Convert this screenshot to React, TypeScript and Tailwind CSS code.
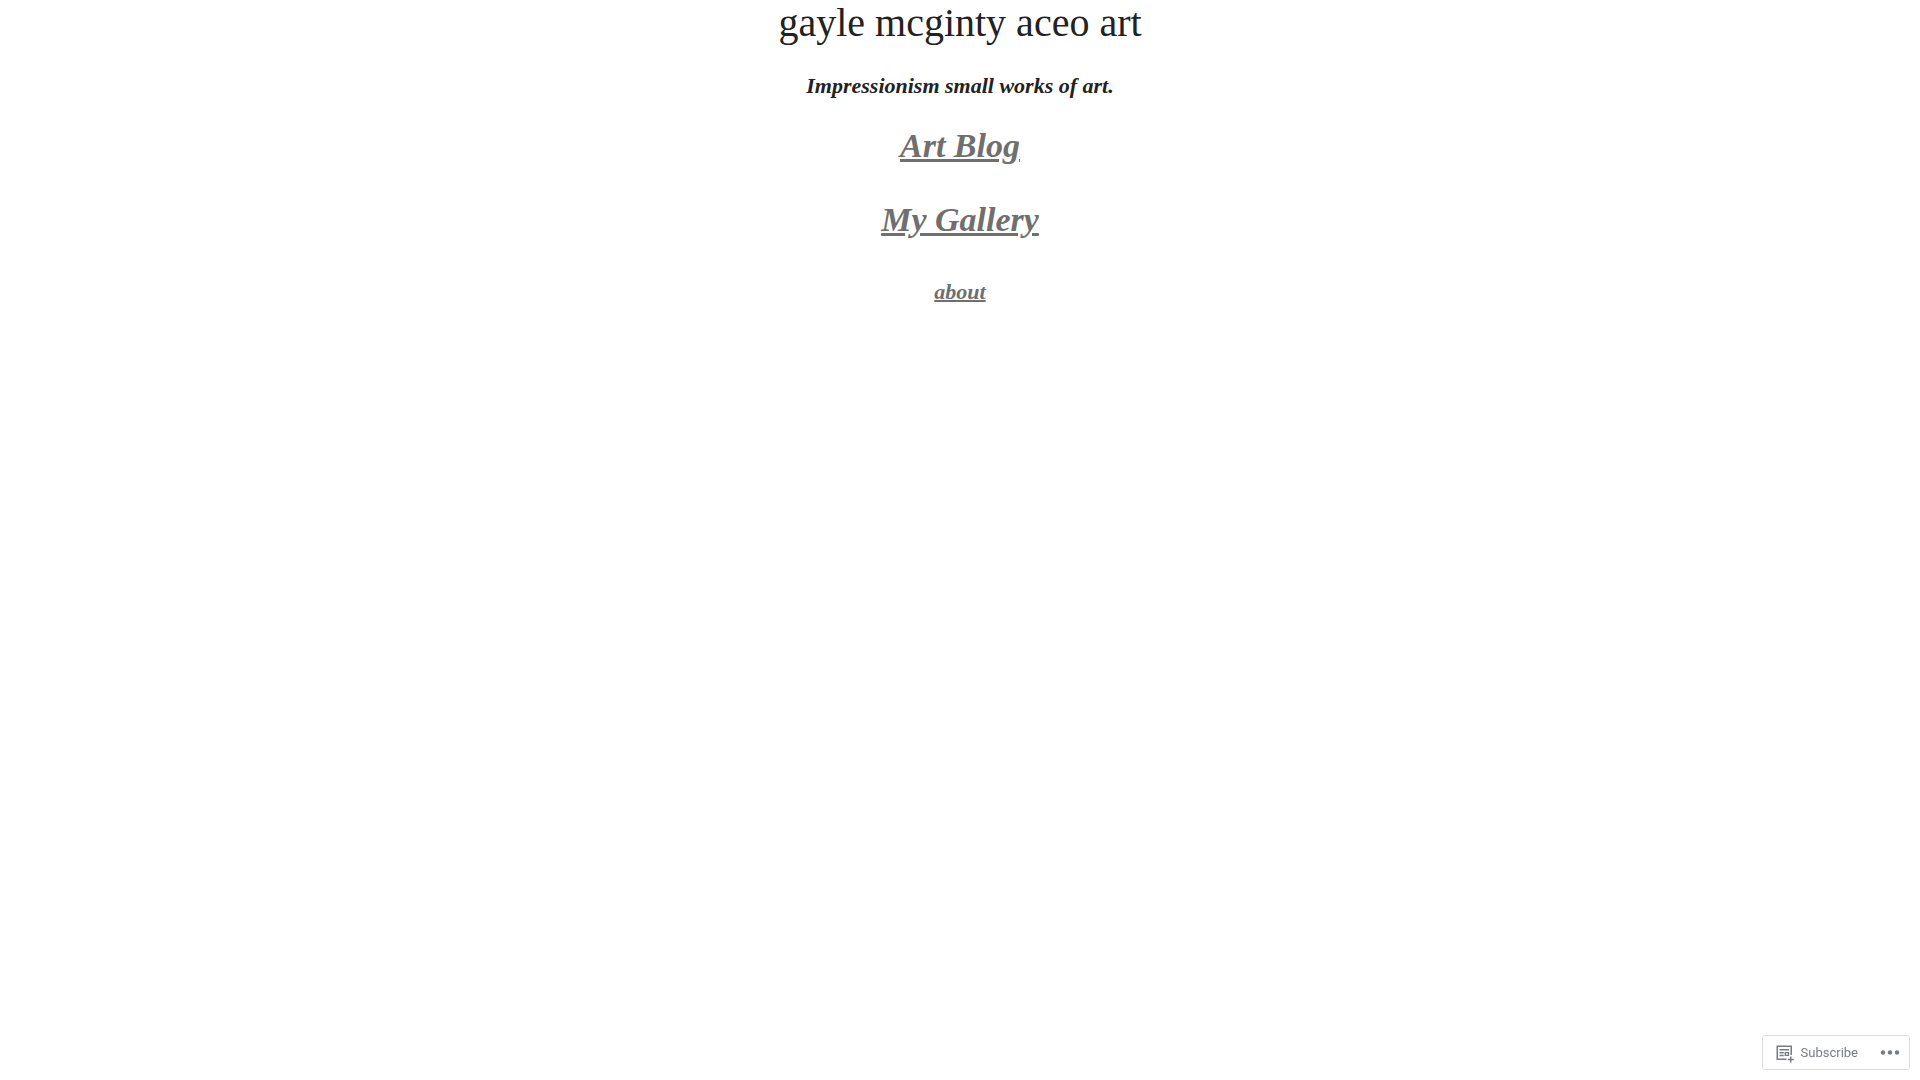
import React from "react";

const links = [
  { label: "Art Blog", href: "#blog", className: "mt-[26px] text-[34px] leading-10 decoration-3" },
  { label: "My Gallery", href: "#gallery", className: "mt-[34px] text-[34px] leading-10 decoration-3" },
  { label: "about", href: "#about", className: "mt-[38px] text-[22px] leading-7 decoration-2" },
];

function SubscribeIcon() {
  return (
    <svg className="h-5 w-5" viewBox="0 0 20 20" fill="none" stroke="#787c82" aria-hidden="true">
      <path d="M11.500 16.250H2.250V3.250h14V12" strokeWidth="1.500" />
      <path d="M4.500 6.750h9.500M4.500 9.750h4.200M4.500 12.500h4.200" strokeWidth="1.300" />
      <path d="M10.300 9.600h3.200v2.800h-3.200z" strokeWidth="1.400" />
      <path d="M15.750 13.500v6M12.750 16.500h6" strokeWidth="1.500" />
    </svg>
  );
}

function ActionBar() {
  return (
    <div className="fixed right-[10px] bottom-[10px] flex items-center rounded-[3px] border border-[#dcdcde] bg-white font-['Roboto',sans-serif] text-[13px] text-[#787c82]">
      <button type="button" className="flex h-[33px] items-center gap-1.5 pl-3">
        <SubscribeIcon />
        Subscribe
      </button>
      <button type="button" aria-label="More options" className="ml-5 mr-[7px] flex h-[33px] items-center">
        <svg className="h-6 w-6" viewBox="0 0 24 24" fill="#787c82" aria-hidden="true">
          <circle cx="5" cy="11.500" r="2.200" />
          <circle cx="12" cy="11.500" r="2.200" />
          <circle cx="19" cy="11.500" r="2.200" />
        </svg>
      </button>
    </div>
  );
}

export default function App() {
  return (
    <div className="min-h-screen bg-white font-['Liberation_Serif',serif] text-[#222222]">
      <header className="flex flex-col items-center">
        <h1 className="text-[40px] leading-[46px]">gayle mcginty aceo art</h1>
        <p className="mt-[26px] text-[22px] leading-7 font-bold italic">Impressionism small works of art.</p>
        <nav className="flex flex-col items-center font-bold italic text-[#6f6f6f]">
          {links.map((link) => (
            <a key={link.label} href={link.href} className={`underline ${link.className}`}>
              {link.label}
            </a>
          ))}
        </nav>
      </header>
      <ActionBar />
    </div>
  );
}
